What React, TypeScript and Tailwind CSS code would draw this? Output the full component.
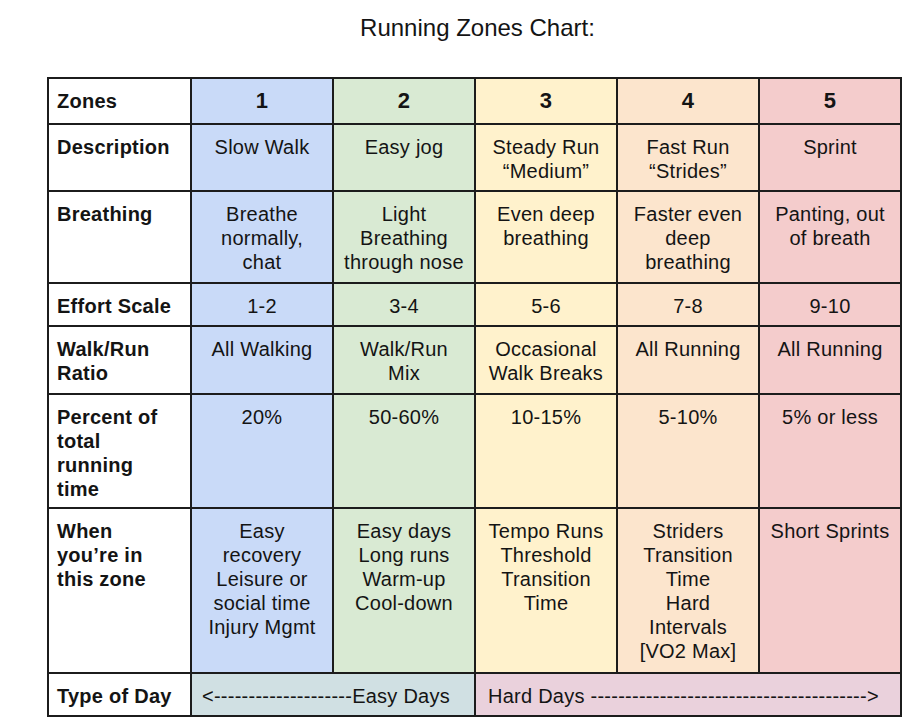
const zoneBg = ['bg-[#c9daf8]', 'bg-[#d9ead3]', 'bg-[#fff2cc]', 'bg-[#fce5cd]', 'bg-[#f4cccc]'];

type Row = { label: React.ReactNode; cells: React.ReactNode[]; h: string };

const rows: Row[] = [
  {
    label: 'Description',
    h: 'h-[67px]',
    cells: [
      'Slow Walk',
      'Easy jog',
      <>Steady Run<br />“Medium”</>,
      <>Fast Run<br />“Strides”</>,
      'Sprint',
    ],
  },
  {
    label: 'Breathing',
    h: 'h-[92px]',
    cells: [
      <>Breathe<br />normally,<br />chat</>,
      <>Light<br />Breathing<br />through nose</>,
      <>Even deep<br />breathing</>,
      <>Faster even<br />deep<br />breathing</>,
      <>Panting, out<br />of breath</>,
    ],
  },
  {
    label: 'Effort Scale',
    h: 'h-[43px]',
    cells: ['1-2', '3-4', '5-6', '7-8', '9-10'],
  },
  {
    label: <>Walk/Run<br />Ratio</>,
    h: 'h-[68px]',
    cells: [
      'All Walking',
      <>Walk/Run<br />Mix</>,
      <>Occasional<br />Walk Breaks</>,
      'All Running',
      'All Running',
    ],
  },
  {
    label: <>Percent of<br />total<br />running<br />time</>,
    h: 'h-[114px]',
    cells: ['20%', '50-60%', '10-15%', '5-10%', '5% or less'],
  },
  {
    label: <>When<br />you’re in<br />this zone</>,
    h: 'h-[165px]',
    cells: [
      <>Easy<br />recovery<br />Leisure or<br />social time<br />Injury Mgmt</>,
      <>Easy days<br />Long runs<br />Warm-up<br />Cool-down</>,
      <>Tempo Runs<br />Threshold<br />Transition<br />Time</>,
      <>Striders<br />Transition<br />Time<br />Hard<br />Intervals<br />[VO2 Max]</>,
      'Short Sprints',
    ],
  },
];

const cell = 'border-2 border-[#1c1c1c] align-top pt-[10px] pb-0 px-2';

export default function App() {
  return (
    <div className="min-h-screen bg-white text-[#141414] font-['Liberation_Sans',Arial,sans-serif]">
      <div className="ml-[47px] w-[853px] pt-[14px]">
        <h1 className="text-center text-[24px] leading-[28px] pl-2">Running Zones Chart:</h1>
        <table className="mt-[35px] w-[853px] table-fixed border-collapse text-[20px] leading-[24px] tracking-[0.25px]">
          <colgroup>
            <col className="w-[143px]" />
            <col className="w-[142px]" />
            <col className="w-[142px]" />
            <col className="w-[142px]" />
            <col className="w-[142px]" />
            <col className="w-[142px]" />
          </colgroup>
          <tbody>
            <tr className="h-[46px]">
              <td className={`${cell} font-bold bg-white`}>Zones</td>
              {[1, 2, 3, 4, 5].map((n, i) => (
                <td key={n} className={`${cell} ${zoneBg[i]} text-center font-bold text-[22px]`}>
                  {n}
                </td>
              ))}
            </tr>
            {rows.map((r, ri) => (
              <tr key={ri} className={r.h}>
                <td className={`${cell} font-bold bg-white`}>{r.label}</td>
                {r.cells.map((c, i) => (
                  <td key={i} className={`${cell} ${zoneBg[i]} text-center`}>
                    {c}
                  </td>
                ))}
              </tr>
            ))}
            <tr className="h-[43px]">
              <td className={`${cell} font-bold bg-white`}>Type of Day</td>
              <td colSpan={2} className={`${cell} bg-[#d0e0e3] pl-[10px] whitespace-nowrap`}>
                &lt;--------------------Easy Days
              </td>
              <td colSpan={3} className={`${cell} bg-[#ead1dc] pl-[12px] whitespace-nowrap`}>
                Hard Days ----------------------------------------&gt;
              </td>
            </tr>
          </tbody>
        </table>
      </div>
    </div>
  );
}
